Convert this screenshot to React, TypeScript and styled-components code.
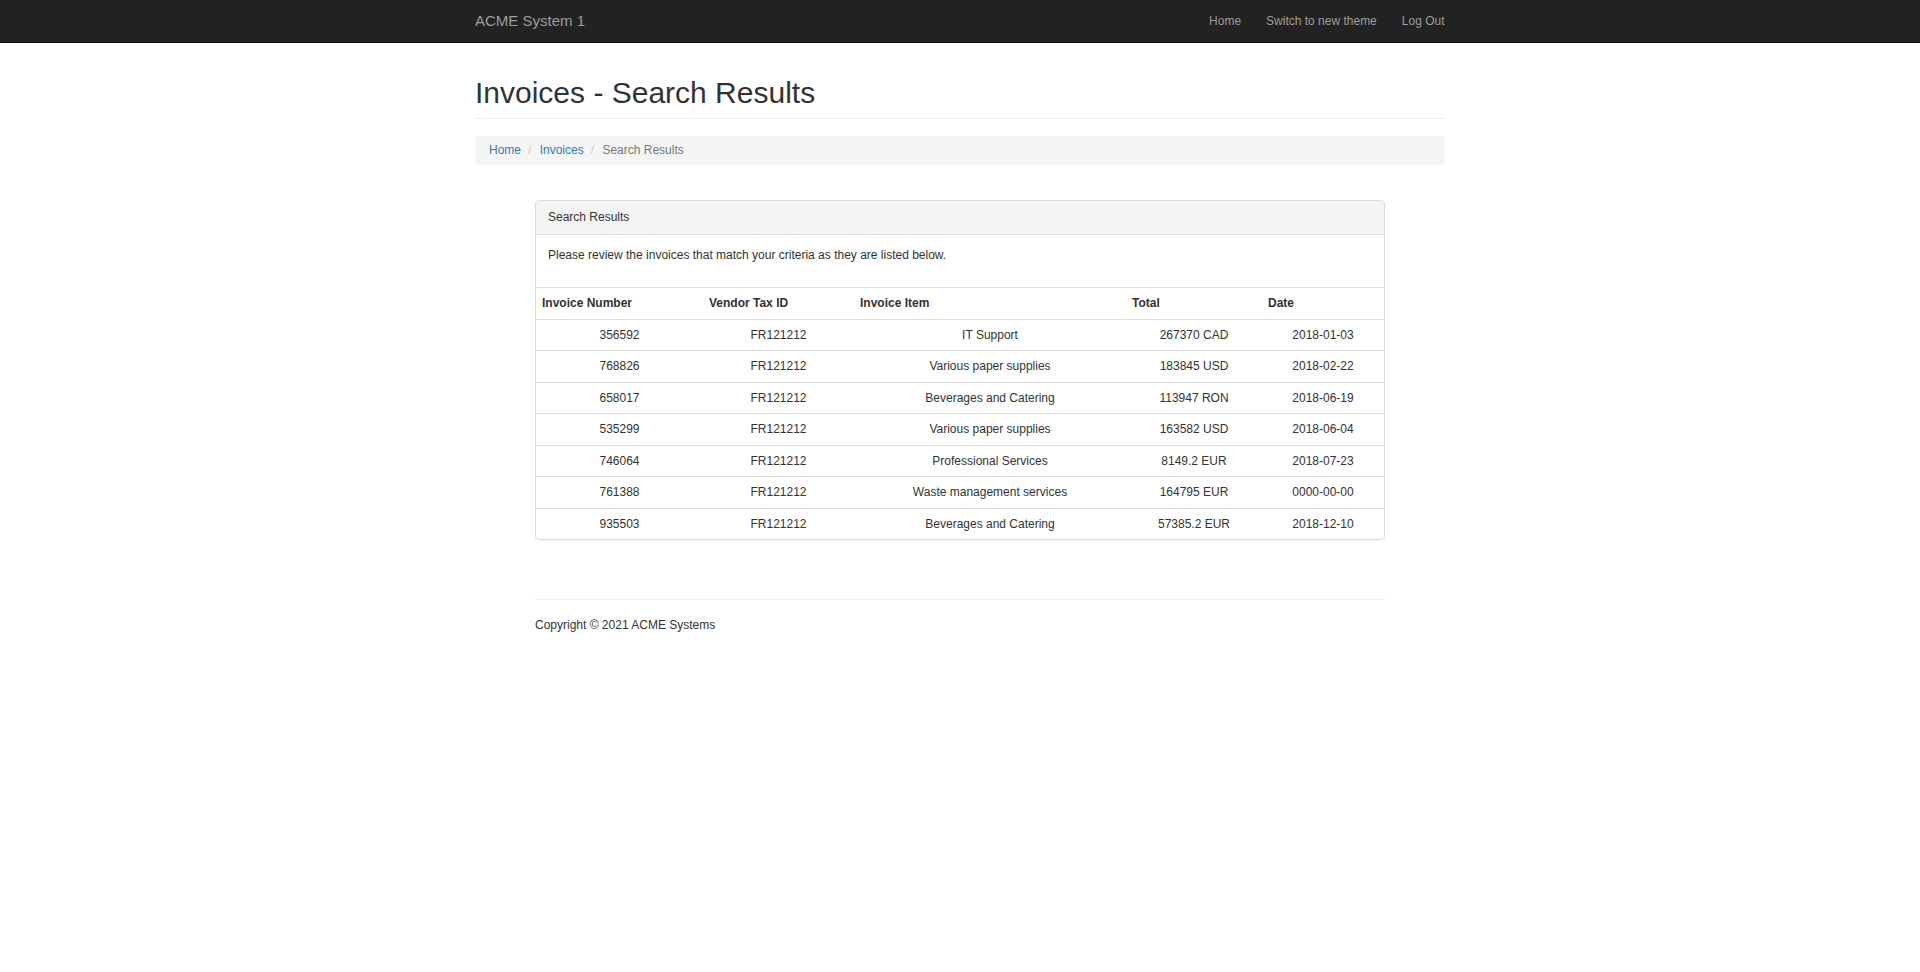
import styled, { createGlobalStyle } from 'styled-components'

const GlobalStyle = createGlobalStyle`
  html, body {
    margin: 0;
    padding: 0;
    background: #fff;
  }
  body {
    font-family: 'Liberation Sans', Arial, Helvetica, sans-serif;
    font-size: 12px;
    line-height: 1.42857;
    color: #333;
  }
  * {
    box-sizing: border-box;
  }
`

type Invoice = {
  number: string
  vendor: string
  item: string
  total: string
  date: string
}

const invoices: Invoice[] = [
  { number: '356592', vendor: 'FR121212', item: 'IT Support', total: '267370 CAD', date: '2018-01-03' },
  { number: '768826', vendor: 'FR121212', item: 'Various paper supplies', total: '183845 USD', date: '2018-02-22' },
  { number: '658017', vendor: 'FR121212', item: 'Beverages and Catering', total: '113947 RON', date: '2018-06-19' },
  { number: '535299', vendor: 'FR121212', item: 'Various paper supplies', total: '163582 USD', date: '2018-06-04' },
  { number: '746064', vendor: 'FR121212', item: 'Professional Services', total: '8149.2 EUR', date: '2018-07-23' },
  { number: '761388', vendor: 'FR121212', item: 'Waste management services', total: '164795 EUR', date: '0000-00-00' },
  { number: '935503', vendor: 'FR121212', item: 'Beverages and Catering', total: '57385.2 EUR', date: '2018-12-10' },
]

const columns = [
  { label: 'Invoice Number', width: 167 },
  { label: 'Vendor Tax ID', width: 151 },
  { label: 'Invoice Item', width: 272 },
  { label: 'Total', width: 136 },
  { label: 'Date', width: 122 },
]

export default function App() {
  return (
    <>
      <GlobalStyle />
      <Navbar>
        <NavInner>
          <Brand href="#">ACME System 1</Brand>
          <NavLinks>
            <NavLink href="#">Home</NavLink>
            <NavLink href="#">Switch to new theme</NavLink>
            <NavLink href="#">Log Out</NavLink>
          </NavLinks>
        </NavInner>
      </Navbar>

      <Container>
        <PageHeader>Invoices - Search Results</PageHeader>

        <Breadcrumb>
          <Crumb>
            <CrumbLink href="#">Home</CrumbLink>
          </Crumb>
          <Crumb>
            <CrumbLink href="#">Invoices</CrumbLink>
          </Crumb>
          <Crumb $active>Search Results</Crumb>
        </Breadcrumb>

        <Panel>
          <PanelHeading>Search Results</PanelHeading>
          <PanelBody>
            <p>Please review the invoices that match your criteria as they are listed below.</p>
          </PanelBody>
          <Table>
            <colgroup>
              {columns.map((c) => (
                <col key={c.label} style={{ width: c.width }} />
              ))}
            </colgroup>
            <thead>
              <tr>
                {columns.map((c) => (
                  <Th key={c.label}>{c.label}</Th>
                ))}
              </tr>
            </thead>
            <tbody>
              {invoices.map((inv) => (
                <tr key={inv.number}>
                  <Td>{inv.number}</Td>
                  <Td>{inv.vendor}</Td>
                  <Td>{inv.item}</Td>
                  <Td>{inv.total}</Td>
                  <Td>{inv.date}</Td>
                </tr>
              ))}
            </tbody>
          </Table>
        </Panel>

        <Footer>
          <p>Copyright © 2021 ACME Systems</p>
        </Footer>
      </Container>
    </>
  )
}

const Navbar = styled.nav`
  background: #222;
  border-bottom: 1px solid #080808;
  height: 43px;
`

const NavInner = styled.div`
  width: 970px;
  height: 42px;
  margin: 0 auto;
  display: flex;
  align-items: center;
  justify-content: space-between;
`

const Brand = styled.a`
  font-size: 15px;
  line-height: 20px;
  color: #9d9d9d;
  text-decoration: none;
`

const NavLinks = styled.div`
  display: flex;
  align-items: center;
  margin-right: -12px;
`

const NavLink = styled.a`
  padding: 0 12.5px;
  font-size: 12px;
  line-height: 17px;
  color: #9d9d9d;
  text-decoration: none;
`

const Container = styled.div`
  width: 970px;
  margin: 0 auto;
`

const PageHeader = styled.h1`
  margin: 33px 0 17px;
  padding-bottom: 9px;
  border-bottom: 1px solid #eee;
  font-size: 30px;
  font-weight: 400;
  line-height: 33px;
  color: #333;
`

const Breadcrumb = styled.ol`
  display: flex;
  margin: 0;
  padding: 6px 14px;
  list-style: none;
  background: #f5f5f5;
  border-radius: 4px;
  line-height: 17px;

  li + li::before {
    content: '/\\00a0';
    padding: 0 5px 0 7px;
    color: #ccc;
  }
`

const Crumb = styled.li<{ $active?: boolean }>`
  color: ${(p) => (p.$active ? '#777' : 'inherit')};
`

const CrumbLink = styled.a`
  color: #337ab7;
  text-decoration: none;
`

const Panel = styled.section`
  width: 850px;
  margin: 35px auto 0;
  border: 1px solid #ddd;
  border-radius: 4px;
  background: #fff;
  box-shadow: 0 1px 1px rgba(0, 0, 0, 0.05);
  overflow: hidden;
`

const PanelHeading = styled.div`
  padding: 8px 12px;
  background: #f5f5f5;
  border-bottom: 1px solid #ddd;
  line-height: 17px;
  color: #333;
`

const PanelBody = styled.div`
  padding: 12px 12px 13px;

  p {
    margin: 0 0 10px;
    line-height: 17px;
  }
`

const Table = styled.table`
  width: 100%;
  border-collapse: collapse;
  table-layout: fixed;
  border-top: 1px solid #ddd;
`

const Th = styled.th`
  padding: 7px 6px;
  text-align: left;
  font-weight: 700;
  line-height: 16.5px;
  border-bottom: 1px solid #ddd;
`

const Td = styled.td`
  padding: 7px 6px;
  text-align: center;
  line-height: 16.5px;
  border-top: 1px solid #ddd;

  tr:first-child > & {
    border-top: none;
  }
`

const Footer = styled.footer`
  width: 850px;
  margin: 59px auto 0;
  padding-top: 17px;
  border-top: 1px solid #eee;

  p {
    margin: 0;
    line-height: 17px;
  }
`
